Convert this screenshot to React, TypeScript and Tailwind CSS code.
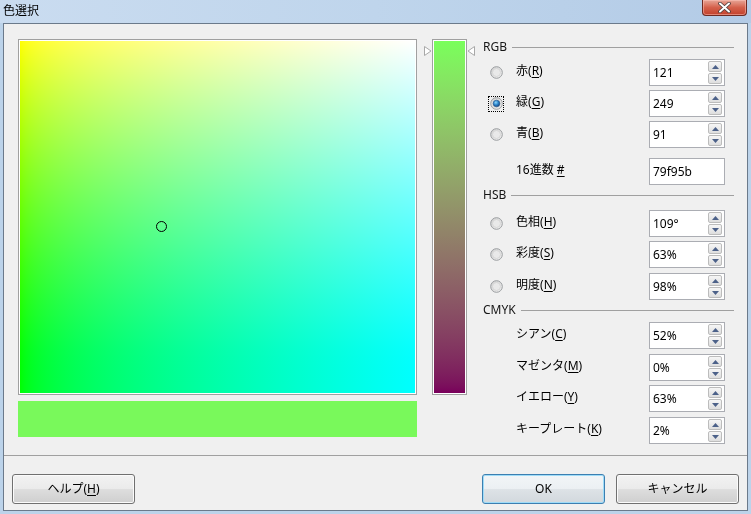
import React from "react";

function Radio({ checked = false, focused = false }: { checked?: boolean; focused?: boolean }) {
  return (
    <span
      className={
        focused
          ? "w-[14px] h-[14px] flex items-center justify-center outline outline-1 outline-dotted outline-black"
          : "w-[14px] h-[14px] flex items-center justify-center"
      }
    >
      <svg width="13" height="13" viewBox="0 0 13 13">
        <defs>
          <linearGradient id={checked ? "rgOn" : "rgOff"} x1="0" y1="0" x2="1" y2="1">
            <stop offset="0" stopColor="#cfcfcf" />
            <stop offset="1" stopColor="#f7f7f7" />
          </linearGradient>
          <radialGradient id="dotG" cx="0.4" cy="0.35" r="0.7">
            <stop offset="0" stopColor="#8fd6fb" />
            <stop offset="0.5" stopColor="#2c86cc" />
            <stop offset="1" stopColor="#133f7a" />
          </radialGradient>
        </defs>
        <circle cx="6.5" cy="6.5" r="5.8" fill={checked ? "url(#rgOn)" : "url(#rgOff)"} stroke="#999c9f" strokeWidth="1" />
        <circle cx="6.5" cy="6.5" r="4" fill="#e9e9e9" stroke="#d2d2d2" strokeWidth="0.8" />
        {checked && <circle cx="6.5" cy="6.5" r="3.3" fill="url(#dotG)" stroke="#1d4d86" strokeWidth="0.6" />}
      </svg>
    </span>
  );
}

function SpinBtn({ up = false }: { up?: boolean }) {
  return (
    <div className="w-[14px] h-[11px] border border-[#bcbcbc] rounded-[2px] bg-linear-to-b from-[#f6f6f6] to-[#dedede] flex items-center justify-center">
      <svg width="7" height="4" viewBox="0 0 7 4">
        {up ? <polygon points="3.5,0 7,4 0,4" fill="#4c6189" /> : <polygon points="0,0 7,0 3.5,4" fill="#4c6189" />}
      </svg>
    </div>
  );
}

function SpinBox({ value, spin = true }: { value: string; spin?: boolean }) {
  return (
    <div className="w-[76px] h-[27px] border border-[#abadb3] bg-white flex items-center mr-[9px] shrink-0">
      <span className="flex-1 pl-[3px] text-[12px] leading-none text-black">{value}</span>
      {spin && (
        <div className="flex flex-col gap-px mr-[2px]">
          <SpinBtn up />
          <SpinBtn />
        </div>
      )}
    </div>
  );
}

function Header({ title, className }: { title: string; className: string }) {
  return (
    <div className={"h-[16px] flex items-center " + className}>
      <span className="text-[12px] leading-none text-[#151515]">{title}</span>
      <div className="flex-1 ml-[5px] h-px bg-[#a0a0a0]" />
    </div>
  );
}

function Row({
  label,
  mn,
  value,
  radio = false,
  checked = false,
  spin = true,
  className,
}: {
  label: string;
  mn: string;
  value: string;
  radio?: boolean;
  checked?: boolean;
  spin?: boolean;
  className: string;
}) {
  return (
    <div className={"h-[27px] flex items-center " + className}>
      {radio ? (
        <div className="w-[33px] flex items-center pl-[6px]">
          <Radio checked={checked} focused={checked} />
        </div>
      ) : (
        <div className="w-[33px]" />
      )}
      <span className="flex-1 text-[12px] leading-none text-black -mt-[3px]">
        {label}
        {mn === "#" ? (
          <>
            {" "}
            <span className="underline underline-offset-2">#</span>
          </>
        ) : (
          <>
            (<span className="underline underline-offset-2">{mn}</span>)
          </>
        )}
      </span>
      <SpinBox value={value} spin={spin} />
    </div>
  );
}

function Button({ children, primary = false }: { children: React.ReactNode; primary?: boolean }) {
  return (
    <div
      className={
        primary
          ? "w-[123px] h-[30px] rounded-[3px] border border-[#3c7fb1] shadow-[inset_0_0_0_1px_#9fdcf8] bg-[linear-gradient(to_bottom,#f2f5f7_0%,#ecf0f3_48%,#dde2e6_52%,#d2d8dd_100%)] flex items-center justify-center text-[12px] text-black"
          : "w-[123px] h-[30px] rounded-[3px] border border-[#707070] shadow-[inset_0_0_0_1px_#fbfbfb] bg-[linear-gradient(to_bottom,#f2f2f2_0%,#ebebeb_48%,#dddddd_52%,#cfcfcf_100%)] flex items-center justify-center text-[12px] text-black"
      }
    >
      {children}
    </div>
  );
}

export default function App() {
  return (
    <div className="w-[751px] h-[514px] overflow-hidden flex flex-col bg-[#bcd3ea] font-['Noto_Sans','Noto_Sans_CJK_JP',sans-serif] text-black">
      {/* title bar */}
      <div className="h-[23px] flex items-start justify-between bg-linear-to-r from-[#cadcf0] via-[#bfd5ec] to-[#b3cbe6]">
        <span className="ml-[3px] mt-[1px] text-[12px] leading-[18px] font-['Noto_Sans_CJK_JP',sans-serif] text-black">色選択</span>
        <div className="mr-[4px] w-[45px] h-[16px] rounded-b-[4px] border border-t-0 border-[#6e2a22] bg-linear-to-b from-[#e6a597] via-[#d4604b] to-[#c2402b] shadow-[inset_0_0_0_1px_rgba(255,200,190,0.5)] flex items-center justify-center">
          <svg width="13" height="11" viewBox="0 0 13 11">
            <path d="M2 1.5 L11 9.5 M11 1.5 L2 9.5" stroke="#4a3a3a" strokeWidth="3.6" strokeLinecap="round" />
            <path d="M2 1.5 L11 9.5 M11 1.5 L2 9.5" stroke="#ffffff" strokeWidth="2" strokeLinecap="round" />
          </svg>
        </div>
      </div>

      {/* client */}
      <div className="flex-1 mx-[3px] mb-[3px] border border-[#6b7a8b] bg-[#f0f0f0] flex flex-col">
        <div className="h-[431px] flex pl-[14px] pt-[15px]">
          {/* left column */}
          <div className="w-[399px] flex flex-col">
            <div className="h-[356px] border border-[#a0a0a0] bg-white p-px">
              <div className="relative w-full h-full bg-linear-to-r from-[#00ff00] to-[#00ffff]">
                <div className="absolute inset-0 bg-linear-to-b from-[#ff0000] to-[#000000] mix-blend-screen" />
                <div className="absolute left-[136px] top-[180px] w-[11px] h-[11px] rounded-full border border-black" />
              </div>
            </div>
            <div className="mt-[6px] h-[36px] bg-[#79f95b]" />
          </div>

          {/* strip */}
          <div className="relative ml-[15px] w-[35px] h-[356px] border border-[#a0a0a0] bg-white p-px">
            <div className="w-full h-full bg-linear-to-b from-[#79ff5b] to-[#79005b]" />
            <svg className="absolute left-[-9px] top-[6px]" width="8" height="10" viewBox="0 0 8 10">
              <polygon points="0.5,0.5 7,5 0.5,9.5" fill="#ffffff" stroke="#a8a8a8" strokeWidth="1" />
            </svg>
            <svg className="absolute left-[34px] top-[6px]" width="8" height="10" viewBox="0 0 8 10">
              <polygon points="7.5,0.5 1,5 7.5,9.5" fill="#ffffff" stroke="#a8a8a8" strokeWidth="1" />
            </svg>
          </div>

          {/* right panel */}
          <div className="ml-[16px] w-[251px] flex flex-col">
            <Header title="RGB" className="" />
            <Row label="赤" mn="R" value="121" radio className="mt-[4px]" />
            <Row label="緑" mn="G" value="249" radio checked className="mt-[4px]" />
            <Row label="青" mn="B" value="91" radio className="mt-[4px]" />
            <Row label="16進数" mn="#" value="79f95b" spin={false} className="mt-[10px]" />
            <Header title="HSB" className="mt-[2px]" />
            <Row label="色相" mn="H" value="109°" radio className="mt-[7px]" />
            <Row label="彩度" mn="S" value="63%" radio className="mt-[4px]" />
            <Row label="明度" mn="N" value="98%" radio className="mt-[5px]" />
            <Header title="CMYK" className="mt-[2px]" />
            <Row label="シアン" mn="C" value="52%" className="mt-[4px]" />
            <Row label="マゼンタ" mn="M" value="0%" className="mt-[5px]" />
            <Row label="イエロー" mn="Y" value="63%" className="mt-[4px]" />
            <Row label="キープレート" mn="K" value="2%" className="mt-[5px]" />
          </div>
        </div>

        {/* bottom */}
        <div className="flex-1 border-t border-[#a0a0a0] flex items-start pt-[18px] px-[8px]">
          <Button>
            ヘルプ(<span className="underline underline-offset-2">H</span>)
          </Button>
          <div className="flex-1" />
          <Button primary>OK</Button>
          <div className="w-[11px]" />
          <Button>キャンセル</Button>
        </div>
      </div>
    </div>
  );
}
